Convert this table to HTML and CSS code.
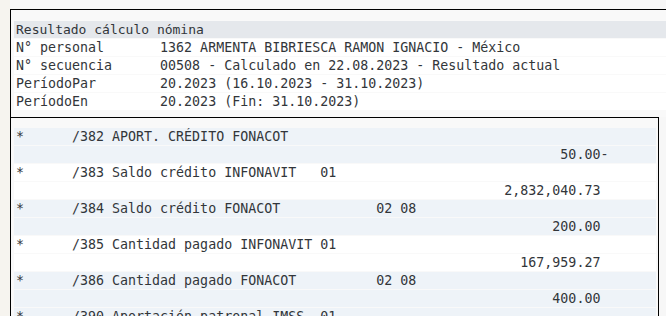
FILE: index.html
```html
<!DOCTYPE html>
<html lang="es">
<head>
<meta charset="utf-8">
<title>Resultado cálculo nómina</title>
<link rel="stylesheet" href="styles.css">
</head>
<body>
<div class="page">
  <div class="strip"></div>
  <div class="main">
    <div class="panel head">
      <div class="row title">Resultado cálculo nómina</div>
      <div class="row">N° personal       1362 ARMENTA BIBRIESCA RAMON IGNACIO - México</div>
      <div class="row">N° secuencia      00508 - Calculado en 22.08.2023 - Resultado actual</div>
      <div class="row">PeríodoPar        20.2023 (16.10.2023 - 31.10.2023)</div>
      <div class="row">PeríodoEn         20.2023 (Fin: 31.10.2023)</div>
    </div>
    <div class="panel list">
      <div class="item odd">
        <div class="row">*      /382 APORT. CRÉDITO FONACOT</div>
        <div class="row">                                                                    50.00-</div>
      </div>
      <div class="item">
        <div class="row">*      /383 Saldo crédito INFONAVIT   01</div>
        <div class="row">                                                             2,832,040.73</div>
      </div>
      <div class="item odd">
        <div class="row">*      /384 Saldo crédito FONACOT            02 08</div>
        <div class="row">                                                                   200.00</div>
      </div>
      <div class="item">
        <div class="row">*      /385 Cantidad pagado INFONAVIT 01</div>
        <div class="row">                                                               167,959.27</div>
      </div>
      <div class="item odd">
        <div class="row">*      /386 Cantidad pagado FONACOT          02 08</div>
        <div class="row">                                                                   400.00</div>
      </div>
      <div class="item odd">
        <div class="row">*      /390 Aportación patronal IMSS  01</div>
        <div class="row">                                                                   </div>
      </div>
    </div>
  </div>
</div>
</body>
</html>
```

FILE: styles.css
```css
html, body {
  margin: 0;
  padding: 0;
  height: 100%;
  overflow: hidden;
}
body {
  background: #f7f7f7;
  font-family: "DejaVu Sans Mono", "Liberation Mono", monospace;
  font-size: 13.3px;
  color: #32363a;
}
.page {
  display: flex;
  height: 100%;
}
.strip {
  width: 10px;
  flex: none;
  background: #f6f4ef;
}
.main {
  flex: 1;
  padding-top: 9px;
  display: flex;
  flex-direction: column;
}
.panel {
  background: #f9f9f9;
  border-top: 1px solid #000;
  border-left: 1px solid #000;
}
.head {
  padding: 11px 0 6px 3px;
}
.list {
  margin-right: 7px;
  border-right: 1px solid #000;
  padding: 10px 2px 0 3px;
  flex: 1;
}
.row {
  height: 17px;
  line-height: 17px;
  margin-bottom: 1px;
  padding-left: 2px;
  white-space: pre;
  background: #fff;
}
.head .title {
  background: #e5e8ec;
  font-size: 13px;
}
.item.odd .row {
  background: #eef3f8;
}
```
